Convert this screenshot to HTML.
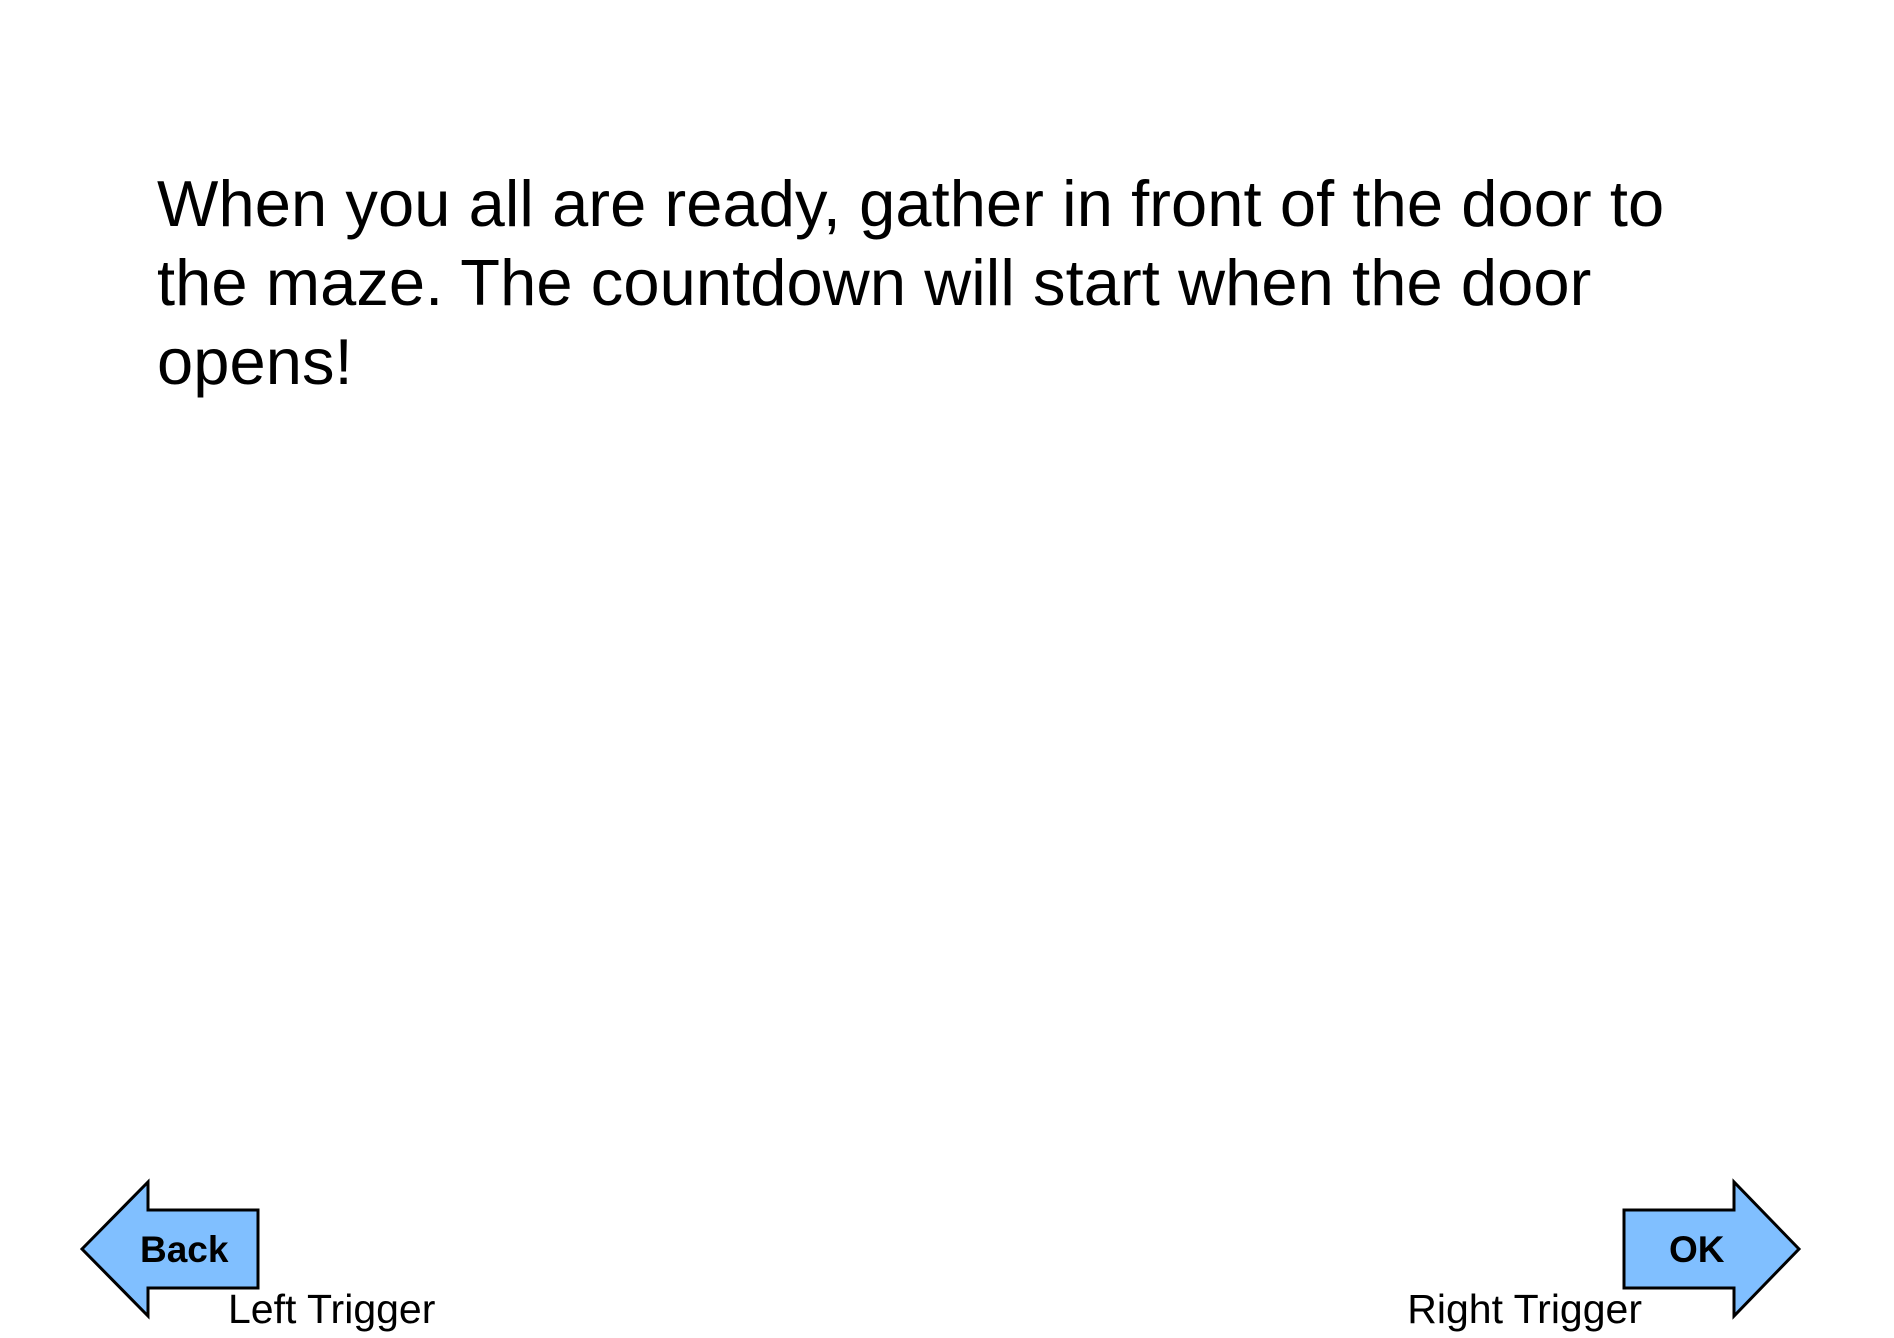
<!DOCTYPE html>
<html><head><meta charset="utf-8"><style>
html,body{margin:0;padding:0;background:#fff;width:1894px;height:1338px;overflow:hidden;position:relative;font-family:"Liberation Sans",Arial,sans-serif;color:#000}
.main{position:absolute;left:157px;top:164px;font-size:65px;line-height:79px;white-space:pre;letter-spacing:0.1px}
.lbl{position:absolute;font-size:41px;line-height:41px;white-space:pre}
.btn{position:absolute;font-size:37px;font-weight:bold;line-height:37px}
svg{position:absolute;left:0;top:0}
</style></head><body>
<svg width="1894" height="1338">
<polygon points="82,1249 148,1182 148,1210 258,1210 258,1288 148,1288 148,1316" fill="#80bfff" stroke="#000" stroke-width="3" stroke-linejoin="miter"/>
<polygon points="1799,1249 1734,1182 1734,1210 1624,1210 1624,1288 1734,1288 1734,1316" fill="#80bfff" stroke="#000" stroke-width="3" stroke-linejoin="miter"/>
</svg>
<div class="main">When you all are ready, gather in front of the door to
the maze. The countdown will start when the door
opens!</div>
<div class="btn" style="left:140px;top:1231px">Back</div>
<div class="btn" style="left:1669px;top:1231px">OK</div>
<div class="lbl" style="left:228px;top:1289px">Left Trigger</div>
<div class="lbl" style="right:252px;top:1289px">Right Trigger</div>
</body></html>
